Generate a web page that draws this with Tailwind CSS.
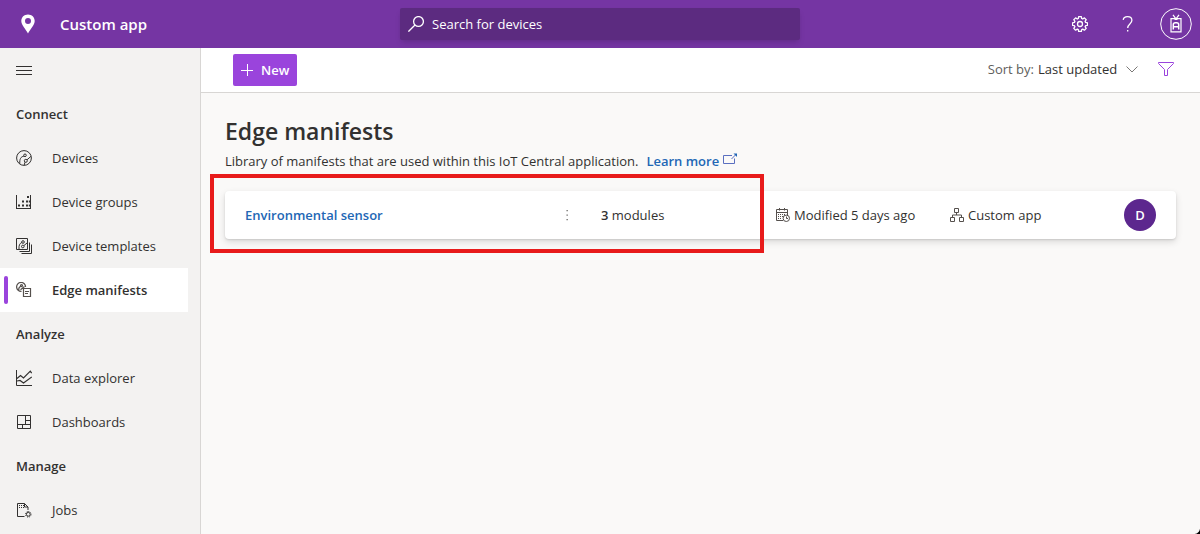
<!DOCTYPE html>
<html lang="en">
<head>
<meta charset="utf-8">
<meta name="viewport" content="width=device-width, initial-scale=1">
<title>Custom app - Edge manifests</title>
<script src="https://cdn.jsdelivr.net/npm/@tailwindcss/browser@4"></script>
</head>
<body class="flex h-screen flex-col overflow-hidden bg-[#faf9f8] font-['Open_Sans','Noto_Sans',sans-serif] text-[13px] leading-5 text-[#323130]">

<header class="grid h-12 shrink-0 grid-cols-3 items-center bg-[#7535a3] text-white">
  <div class="flex items-center pl-5">
    <svg class="h-5 w-4" viewBox="0 0 16 20" fill="currentColor" aria-hidden="true"><path fill-rule="evenodd" d="M8 .5C4.200 .5 1.300 3.300 1.300 7c0 4 4.300 8 6.700 12.500C10.400 15 14.700 11 14.700 7 14.700 3.300 11.800.5 8 .5zM8 3.900a3 3 0 1 1 0 6 3 3 0 0 1 0-6z"/></svg>
    <span class="ml-6 text-[15px] font-semibold">Custom app</span>
  </div>
  <label class="flex h-8 items-center gap-2 rounded-xs bg-[#5c2b80] pl-2 shadow-md">
    <svg class="size-4 shrink-0" viewBox="0 0 16 16" fill="none" stroke="currentColor" stroke-width="1.300" aria-hidden="true"><circle cx="10.500" cy="5.500" r="4.900"/><path d="M7 9 .4 15.600"/></svg>
    <input type="search" placeholder="Search for devices" aria-label="Search for devices" class="min-w-0 flex-1 bg-transparent outline-none placeholder:text-white">
  </label>
  <div class="flex items-center justify-end gap-2 pr-2">
    <button class="flex size-8 items-center justify-center" aria-label="Settings">
      <svg class="size-4" viewBox="0 0 16 16" fill="none" stroke="currentColor" stroke-width="1.300" stroke-linejoin="round" aria-hidden="true"><circle cx="8" cy="8" r="2.500"/><path d="M6.700.6h2.600l.4 1.900 1 .5 1.700-1.100 1.800 1.800-1.100 1.700.5 1 1.900.4v2.500l-1.900.4-.5 1 1.100 1.700-1.800 1.800-1.700-1.100-1 .5-.4 1.900H6.700l-.4-1.900-1-.5-1.700 1.100-1.800-1.800 1.100-1.700-.5-1-1.900-.4V6.800l1.900-.4.5-1-1.100-1.700 1.800-1.800L5.300 3l1-.5z"/></svg>
    </button>
    <button class="ml-2 flex size-8 items-center justify-center" aria-label="Help">
      <svg class="size-4" viewBox="0 0 16 16" fill="none" stroke="currentColor" stroke-width="1.300" aria-hidden="true"><path d="M3.200 3.900C3.500 1.900 5.200.7 7.500.7c2.600 0 4.400 1.400 4.400 3.600 0 3.700-4.200 3.700-4.200 7.700"/><path d="M7.700 14v1.600"/></svg>
    </button>
    <button class="ml-2 flex size-8 items-center justify-center" aria-label="Account">
      <svg class="size-8" viewBox="0 0 32 32" fill="none" stroke="currentColor" aria-hidden="true"><circle cx="16" cy="16" r="15.300" stroke-width="1"/><path stroke-width="1.200" d="M11 10.600h10v13.200H11zM13 6.800l2.600 3.600M19 6.800l-2.600 3.600M14.500 11.500h3"/><path stroke-width="1.500" d="M13.300 21.500v-4.700q0-2 2-2h1.400q2 0 2 2v4.700M13.300 18.700h5.400"/></svg>
    </button>
  </div>
</header>

<div class="flex min-h-0 flex-1">
  <nav class="w-[201px] shrink-0 overflow-hidden border-r border-[#d8d6d4] bg-[#f3f2f1]" aria-label="Main">
    <button class="flex h-11 w-12 items-center justify-center" aria-label="Toggle navigation">
      <svg class="size-4" viewBox="0 0 16 16" stroke="currentColor" aria-hidden="true"><path d="M0 4.500h16M0 8.500h16M0 12.500h16"/></svg>
    </button>
    <h2 class="flex h-11 items-center px-4 font-semibold">Connect</h2>
    <ul>
      <li><a href="#" class="flex h-11 items-center gap-5 pl-4">
        <svg class="size-4" viewBox="0 0 16 16" fill="none" stroke="currentColor" stroke-width="1" aria-hidden="true"><circle cx="8" cy="8" r="7.400"/><circle cx="9" cy="5.300" r="1.300"/><circle cx="9.800" cy="10.800" r="1.500"/><path d="M7.900 6.200C4.800 6.600 3.500 9 3.800 13.700M11 9.800l4-3.500M9 12.200l-.8 2.800"/></svg>
        Devices</a></li>
      <li><a href="#" class="flex h-11 items-center gap-5 pl-4">
        <svg class="size-4" viewBox="0 0 16 16" fill="currentColor" aria-hidden="true"><path d="M0 1h1v13h13V1h1v14H0z"/><path d="M2 10.500h2v2H2zM6 10.500h2v2H6zM6 6.500h2v2H6zM10 10.500h2v2h-2zM10 6.500h2v2h-2zM11 2h2v2h-2zM12.800 6.500h1.500v2h-1.500zM12.800 10.500h1.500v2h-1.500z"/></svg>
        Device groups</a></li>
      <li><a href="#" class="flex h-11 items-center gap-5 pl-4">
        <svg class="size-4" viewBox="0 0 16 16" fill="none" stroke="currentColor" aria-hidden="true"><path d="M.5.500h11v11H.5z"/><circle cx="7" cy="4" r="1.300"/><circle cx="6.800" cy="8.500" r="1.300"/><path d="M5.800 4.500C3.500 5.500 2.800 7.500 3 11M8 7.500 11 5M3.500 13.500h10v-9M5.500 15.500h10v-9"/></svg>
        Device templates</a></li>
      <li><a href="#" aria-current="page" class="mr-3 flex h-11 items-center bg-white pl-1 font-semibold">
        <span class="h-7 w-1 rounded-sm bg-[#9a44dc]"></span>
        <svg class="mr-5 ml-2 size-4" viewBox="0 0 16 16" fill="none" stroke="#55504d" stroke-width="1.200" aria-hidden="true"><path d="M5.500 9.400A4.500 4.500 0 1 1 9.600 5"/><circle cx="5.500" cy="3.600" r="1"/><path d="M4.800 4.300C3 5 2.500 6.500 2.700 8.500M4.500 7.800 8.500 4.500M7.500 6.500h7v8h-7zM9 9.500h4M9 11.500h3"/></svg>
        Edge manifests</a></li>
    </ul>
    <h2 class="flex h-11 items-center px-4 font-semibold">Analyze</h2>
    <ul>
      <li><a href="#" class="flex h-11 items-center gap-5 pl-4">
        <svg class="size-4" viewBox="0 0 16 16" fill="none" stroke="currentColor" aria-hidden="true"><path d="M.5 0v15.500H16"/><path stroke-width="1.200" d="M1 8.500 4.500 5.500l3 2.500L14.300 1.200l1.500 2M1 11l3-.5 3.500 2.500L15.800 7"/></svg>
        Data explorer</a></li>
      <li><a href="#" class="flex h-11 items-center gap-5 pl-4">
        <svg class="size-4" viewBox="0 0 16 16" fill="none" stroke="currentColor" aria-hidden="true"><path d="M1.500 1.500h13v13h-13zM9.500 1.500v9M1.500 10.500h13M9.500 6.500h5M6.500 10.500v4"/></svg>
        Dashboards</a></li>
    </ul>
    <h2 class="flex h-11 items-center px-4 font-semibold">Manage</h2>
    <ul>
      <li><a href="#" class="flex h-11 items-center gap-5 pl-4">
        <svg class="size-4" viewBox="0 0 16 16" fill="none" stroke="currentColor" aria-hidden="true"><path d="M8.500 14.500h-7v-13h7l3.500 3.500v3M8.500 1.500V5H12"/><path stroke-dasharray="1 1" d="M3 3.500h5M3 5.500h5"/><circle cx="12.300" cy="12.300" r="1.900"/><path stroke-dasharray="1.100 1.100" d="M12.300 9.500a2.800 2.800 0 1 1 0 5.600 2.800 2.800 0 0 1 0-5.600z"/></svg>
        Jobs</a></li>
    </ul>
  </nav>

  <main class="min-w-0 flex-1">
    <div class="flex h-[45px] items-center justify-between border-b border-[#d8d6d4] bg-white pr-[26px] pl-8">
      <button class="flex h-8 items-center gap-2 rounded-xs bg-[#9a44dc] px-2 text-white">
        <svg class="size-3" viewBox="0 0 12 12" stroke="currentColor" aria-hidden="true"><path d="M0 6.500h12M6.500 0v12"/></svg>
        <span class="font-semibold">New</span>
      </button>
      <div class="flex items-center pb-0.5">
        <label for="sort" class="text-[#605e5c]">Sort by:</label>
        <select id="sort" class="ml-1 appearance-none bg-transparent"><option>Last updated</option></select>
        <svg class="ml-2 size-3" viewBox="0 0 12 12" fill="none" stroke="#7a7876" aria-hidden="true"><path d="M.5 3.500 6 9l5.500-5.500"/></svg>
        <button class="ml-5 flex size-4 items-center justify-center text-[#9a44dc]" aria-label="Filter">
          <svg class="size-4" viewBox="0 0 16 16" fill="none" stroke="currentColor" aria-hidden="true"><path d="M.5 1.500h15v1L9.500 8.500v6h-3v-6L.5 2.500z"/></svg>
        </button>
      </div>
    </div>

    <div class="px-6 pt-6">
      <h1 class="text-[23px] leading-7 font-semibold">Edge manifests</h1>
      <p class="mt-1.5 flex items-center">Library of manifests that are used within this IoT Central application.
        <a href="#" class="ml-2 flex items-center gap-1 font-semibold text-[#2267b5]">Learn more
          <svg class="mb-1 h-3 w-3.5" viewBox="0 0 14 12" fill="none" stroke="#5a6fc0" aria-hidden="true"><path d="M9 2.500H.5v8h11V5.500M8.500 6 13.200 1.200"/><path fill="#2267b5" stroke="none" d="M10.500.5H14V4z"/></svg>
        </a>
      </p>

      <ul class="mt-5">
        <li class="relative grid h-12 grid-cols-[minmax(0,356fr)_minmax(0,175fr)_minmax(0,174fr)_minmax(0,174fr)_32px] items-center rounded bg-white px-5 shadow-[0_3px_7px_rgba(0,0,0,0.13),0_1px_2px_rgba(0,0,0,0.11)]">
          <div class="flex items-center justify-between pr-6">
            <a href="#" class="font-semibold text-[#2267b5]">Environmental sensor</a>
            <button class="flex size-5 items-center justify-center" aria-label="More actions">
              <svg class="size-4" viewBox="0 0 16 16" fill="#6a6866" aria-hidden="true"><path d="M7.500 3h1.300v1.300H7.500zM7.500 7.500h1.300v1.300H7.500zM7.500 12h1.300v1.300H7.500z"/></svg>
            </button>
          </div>
          <div><span class="font-semibold">3</span> modules</div>
          <div class="flex items-center gap-1">
            <svg class="size-3.5" viewBox="0 0 14 14" fill="none" stroke="#55504d" aria-hidden="true"><path d="M7 12.500H.5v-11h11V7M.5 4.500h11M3.500 0v2.500M8.500 0v2.500"/><path stroke-dasharray="1 1" d="M2 6.500h8M2 8.500h5M2 10.500h4"/><circle cx="10.300" cy="10.300" r="3.200" fill="#fff"/><path d="M10.500 8.500v2H12"/></svg>
            Modified 5 days ago
          </div>
          <div class="flex items-center gap-1">
            <svg class="size-3.5" viewBox="0 0 14 14" fill="none" stroke="#55504d" aria-hidden="true"><path d="M4.500.5h4v4h-4zM.5 9.500h4v4h-4zM9.500 9.500h4v4h-4zM6.500 4.500V7M2.500 9.500V7h9v2.500"/></svg>
            Custom app
          </div>
          <div class="flex size-8 items-center justify-center rounded-full bg-[#5c278e] font-semibold text-white">D</div>
          <span class="pointer-events-none absolute -top-[17px] -left-[15px] h-[79px] w-[554px] border-4 border-[#e81b1b]"></span>
        </li>
      </ul>
    </div>
  </main>
</div>

<svg class="fixed right-0 bottom-0 size-1.5" viewBox="0 0 8 8" aria-hidden="true"><path d="M8 1v7H1q6-1 7-7z"/></svg>
</body>
</html>
